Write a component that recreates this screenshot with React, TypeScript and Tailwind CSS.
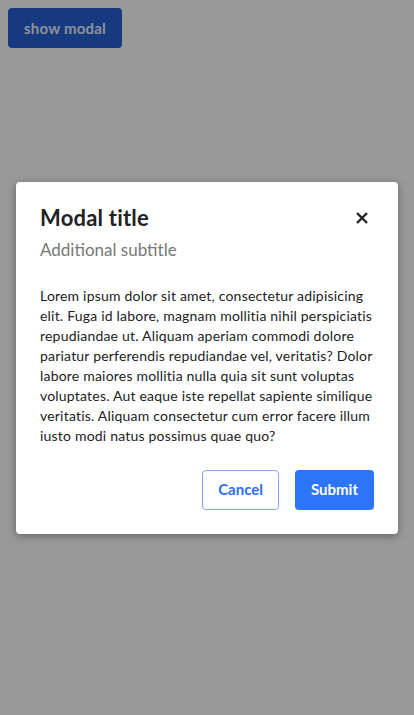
import { useState } from "react";

const bodyLines = [
  "Lorem ipsum dolor sit amet, consectetur adipisicing",
  "elit. Fuga id labore, magnam mollitia nihil perspiciatis",
  "repudiandae ut. Aliquam aperiam commodi dolore",
  "pariatur perferendis repudiandae vel, veritatis? Dolor",
  "labore maiores mollitia nulla quia sit sunt voluptas",
  "voluptates. Aut eaque iste repellat sapiente similique",
  "veritatis. Aliquam consectetur cum error facere illum",
  "iusto modi natus possimus quae quo?",
];

function CloseIcon() {
  return (
    <svg aria-hidden="true" viewBox="0 0 24 24" className="h-6 w-6" fill="none" stroke="currentColor" strokeWidth="2.4" strokeLinecap="butt">
      <path d="M7 7 17 17M17 7 7 17" />
    </svg>
  );
}

export default function App() {
  const [open, setOpen] = useState(true);

  return (
    <div className="relative min-h-[715px] w-full bg-white font-['Lato','Liberation_Sans',sans-serif]">
      <div className="p-2">
        <button
          type="button"
          onClick={() => setOpen(true)}
          className="h-10 rounded bg-[#265fd4] px-4 text-[15px] font-bold tracking-[0.2px] text-[#e8f2ff]"
        >
          show modal
        </button>
      </div>

      {open && (
        <div className="absolute inset-0 flex items-center justify-center bg-black/40 px-4">
          <div className="w-full rounded bg-white px-6 pb-6 pt-5 shadow-[0_2px_8px_rgba(0,0,0,0.35)]">
            <div className="flex items-start justify-between">
              <div>
                <h2 className="text-[22px] font-bold leading-8 tracking-[0.2px] text-[#222]">Modal title</h2>
                <p className="mt-1 text-[17px] leading-6 text-[#777]">Additional subtitle</p>
              </div>
              <button
                type="button"
                onClick={() => setOpen(false)}
                aria-label="Close"
                className="mt-1 flex h-6 w-6 items-center justify-center text-[#222]"
              >
                <CloseIcon />
              </button>
            </div>

            <p className="mt-6 text-[14px] leading-5 tracking-[0.2px] text-[#222]">
              {bodyLines.map((line) => (
                <span key={line} className="block whitespace-nowrap">
                  {line}
                </span>
              ))}
            </p>

            <div className="mt-6 flex justify-end gap-4">
              <button
                type="button"
                onClick={() => setOpen(false)}
                className="h-10 rounded border border-[#80a9f7] bg-white px-[15px] text-[15px] font-bold text-[#2d6ef5]"
              >
                Cancel
              </button>
              <button
                type="button"
                onClick={() => setOpen(false)}
                className="h-10 rounded bg-[#2d74f7] px-4 text-[15px] font-bold text-white"
              >
                Submit
              </button>
            </div>
          </div>
        </div>
      )}
    </div>
  );
}
